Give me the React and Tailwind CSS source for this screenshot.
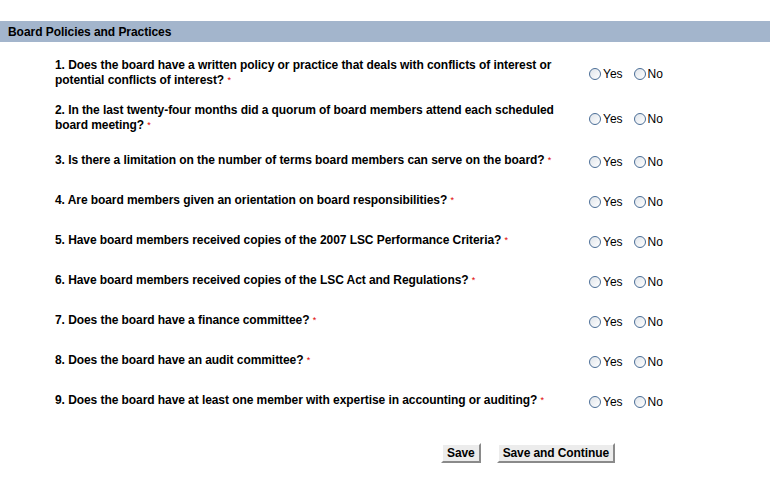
import React from 'react';

const questions = [
  { text: '1. Does the board have a written policy or practice that deals with conflicts of interest or potential conflicts of interest?', tall: true },
  { text: '2. In the last twenty-four months did a quorum of board members attend each scheduled board meeting?', tall: true },
  { text: '3. Is there a limitation on the number of terms board members can serve on the board?' },
  { text: '4. Are board members given an orientation on board responsibilities?' },
  { text: '5. Have board members received copies of the 2007 LSC Performance Criteria?' },
  { text: '6. Have board members received copies of the LSC Act and Regulations?' },
  { text: '7. Does the board have a finance committee?' },
  { text: '8. Does the board have an audit committee?' },
  { text: '9. Does the board have at least one member with expertise in accounting or auditing?' },
];

const Radio = ({ label }) => (
  <label className="flex items-center">
    <span className="w-[12px] h-[12px] rounded-full border border-[#4a6d96] bg-gradient-to-br from-[#dfe4ea] to-white" />
    <span className="ml-[2px] text-[12px] text-black">{label}</span>
  </label>
);

const App = () => {
  return (
    <div className="w-[770px] h-[493px] bg-white pt-[21px] font-['Liberation_Sans',Arial,sans-serif]">
      {/* Section header */}
      <div className="h-[21px] bg-[#a3b5cc] pl-[8px] flex items-center text-[12px] font-bold text-black tracking-[-0.05px]">
        Board Policies and Practices
      </div>

      <div className="pt-[8px] pl-[55px]">
        {questions.map((q, i) => (
          <div key={i} className={`flex items-center ${q.tall ? 'h-[45px]' : 'h-[40px]'}`}>
            <div className="w-[510px] text-[12px] leading-[15px] font-bold text-black tracking-[-0.07px]">
              {q.text}{' '}
              <span className="relative -top-[1px] text-[9px] leading-none text-[#e00000] font-normal">*</span>
            </div>
            <div className="ml-[24px] flex items-center gap-[11px] pt-[3px]">
              <Radio label="Yes" />
              <Radio label="No" />
            </div>
          </div>
        ))}
      </div>

      <div className="pl-[441px] pt-[23px] flex gap-[16px]">
        <button className="h-[20px] px-[4px] bg-[#ececec] border-2 border-t-white border-l-white border-b-[#8a8a8a] border-r-[#8a8a8a] text-[12px] font-bold text-black leading-none tracking-[-0.1px]">
          Save
        </button>
        <button className="h-[20px] px-[4px] bg-[#ececec] border-2 border-t-white border-l-white border-b-[#8a8a8a] border-r-[#8a8a8a] text-[12px] font-bold text-black leading-none tracking-[-0.1px]">
          Save and Continue
        </button>
      </div>
    </div>
  );
};

export default App;
